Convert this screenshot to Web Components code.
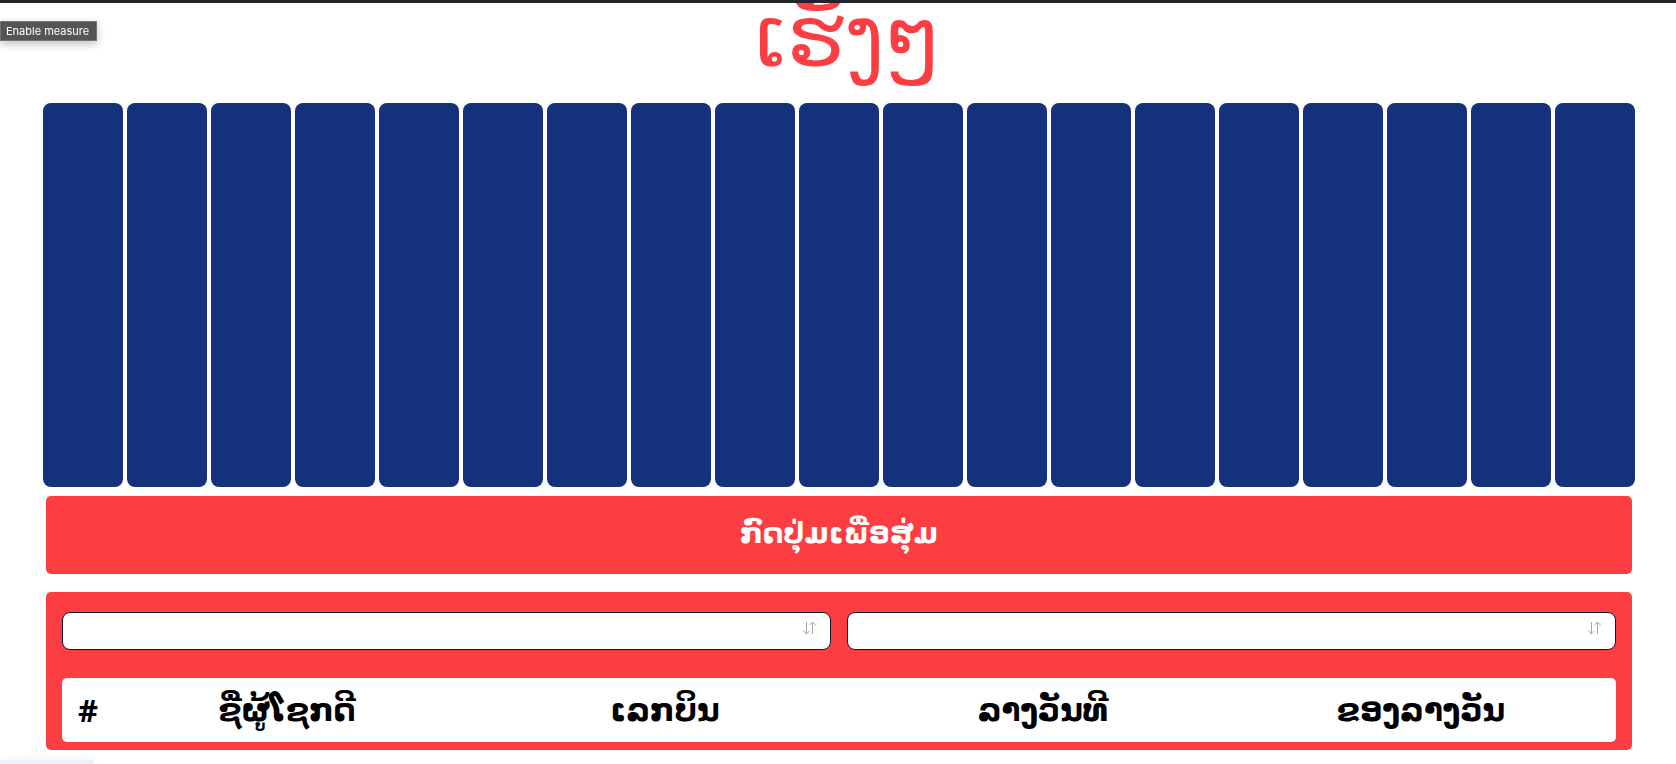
<!DOCTYPE html>
<html lang="lo">
<head>
<meta charset="utf-8">
<meta name="viewport" content="width=device-width, initial-scale=1">
<title>ເຮັງໆ</title>
<style>
  html, body { margin: 0; height: 100%; }
  body { background: #fff; overflow: hidden; font-family: "DejaVu Sans", sans-serif; }
</style>
</head>
<body>
<lucky-page></lucky-page>
<script>
const define = (name, html) => {
  const template = document.createElement('template');
  template.innerHTML = html;
  customElements.define(name, class extends HTMLElement {
    constructor() {
      super();
      this.attachShadow({ mode: 'open' }).append(template.content.cloneNode(true));
    }
  });
};

define('lucky-title', `
  <style>
    :host { display: flex; box-sizing: border-box; justify-content: center; align-items: flex-end; height: 103px; padding-bottom: 6px; overflow: hidden; border-top: 3px solid #212529; color: #fc3d42; }
    h1 { margin: 0; padding-left: 20px; font-size: 84px; line-height: 120px; font-weight: 400; }
  </style>
  <h1><slot></slot></h1>`);

customElements.define('lucky-reels', class extends HTMLElement {
  connectedCallback() {
    const root = this.attachShadow({ mode: 'open' });
    root.innerHTML = `
      <style>
        :host { display: grid; grid-auto-flow: column; grid-auto-columns: 1fr; gap: 4px; height: 384px; margin: 0 41px 0 43px; }
        div { background: #14327b; border-radius: 8px; }
      </style>`;
    for (let i = 0; i < Number(this.getAttribute('count')); i++) {
      root.append(document.createElement('div'));
    }
  }
});

define('lucky-button', `
  <style>
    :host { display: block; margin: 9px 44px 0 46px; }
    button { display: block; width: 100%; height: 78px; padding: 0 0 4px; border: 0; border-radius: 5px; background: #fc3d42; color: #fff; font: bold 29px/48px "DejaVu Sans", sans-serif; }
  </style>
  <button type="button"><slot></slot></button>`);

customElements.define('lucky-select', class extends HTMLElement {
  connectedCallback() {
    this.attachShadow({ mode: 'open' }).innerHTML = `
      <style>
        :host { display: block; position: relative; flex: 1; }
        select { appearance: none; display: block; box-sizing: border-box; width: 100%; height: 38px; padding: 0 40px 0 12px; border: 1px solid #111827; border-radius: 8px; background: #fff; font: 16px "DejaVu Sans", sans-serif; }
        svg { position: absolute; top: 9px; right: 14px; width: 16px; height: 14px; pointer-events: none; }
      </style>
      <select aria-label="${this.getAttribute('label')}"><option></option></select>
      <svg viewBox="0 0 16 14" fill="none" stroke="#a0a6b0" stroke-width="1"><path d="M5.5 1v12M2 9.5 5.5 13 8.5 10M11.5 13V1M8.5 4 11.5 1 15 4.5"/></svg>`;
  }
});

define('winner-table', `
  <style>
    :host { display: block; margin-top: 28px; padding-right: 6px; border-radius: 5px; background: #fff; }
    table { width: 100%; table-layout: fixed; border-collapse: collapse; color: #000; }
    th { height: 64px; padding: 0; font-size: 31px; line-height: 48px; font-weight: 700; text-align: center; white-space: nowrap; box-sizing: border-box; }
    th:first-child { width: 36px; padding-left: 16px; text-align: left; font-family: "Noto Sans", sans-serif; }
  </style>
  <table><thead><tr>
    <th scope="col">#</th><th scope="col">ຊື່ຜູ້ໂຊກດີ</th><th scope="col">ເລກບິນ</th><th scope="col">ລາງວັນທີ</th><th scope="col">ຂອງລາງວັນ</th>
  </tr></thead></table>`);

define('winner-panel', `
  <style>
    :host { display: block; margin: 18px 44px 0 46px; padding: 20px 16px 8px; border-radius: 5px; background: #fc3d42; }
    form { display: flex; gap: 16px; }
  </style>
  <form><lucky-select label="ລາງວັນທີ"></lucky-select><lucky-select label="ຂອງລາງວັນ"></lucky-select></form>
  <winner-table></winner-table>`);

define('measure-button', `
  <style>
    :host { display: block; position: fixed; top: 21px; left: 0; }
    button { display: block; height: 20px; padding: 0 7px 0 5px; border: 1px solid #757575; background: #555; color: #fff; box-shadow: 0 3px 8px rgba(0,0,0,.25); font: 11px/18px Inter, sans-serif; }
  </style>
  <button type="button"><slot></slot></button>`);

define('status-bubble', `
  <style>
    :host { display: block; position: fixed; left: 0; bottom: 0; width: 94px; height: 4px; border-radius: 0 4px 0 0; background: #edf2f6; box-shadow: 0 0 10px rgba(0,0,0,.08); }
  </style>`);

define('lucky-page', `
  <style>:host { display: block; }</style>
  <main>
    <lucky-title>ເຮັງໆ</lucky-title>
    <lucky-reels count="19"></lucky-reels>
    <lucky-button>ກົດປຸ່ມເພື່ອສຸ່ມ</lucky-button>
    <winner-panel></winner-panel>
  </main>
  <measure-button>Enable measure</measure-button>
  <status-bubble></status-bubble>`);
</script>
</body>
</html>
